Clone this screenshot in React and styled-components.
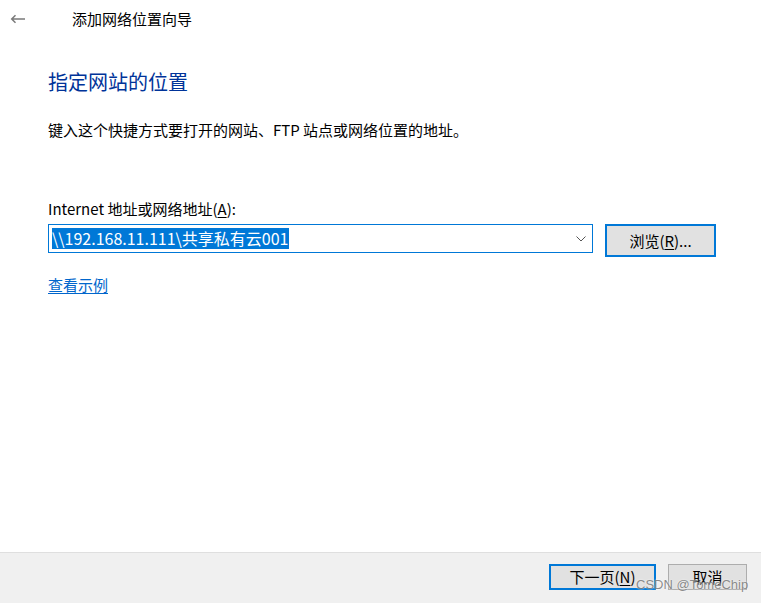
import styled, { createGlobalStyle } from 'styled-components';

const GlobalStyle = createGlobalStyle`
  html, body {
    margin: 0;
    padding: 0;
    background: #ffffff;
  }
  body {
    font-family: "Noto Sans CJK SC", "Noto Sans", sans-serif;
    color: #000000;
  }
`;

const Window = styled.div`
  position: relative;
  display: flex;
  flex-direction: column;
  width: 761px;
  height: 603px;
  overflow: hidden;
  background: #ffffff;
`;

const TopBar = styled.div`
  display: flex;
  align-items: center;
  height: 38px;
  padding-left: 10px;
`;

const BackButton = styled.div`
  display: flex;
  align-items: center;
  width: 62px;
`;

const WindowTitle = styled.span`
  font-size: 15px;
  line-height: 20px;
  color: #000000;
`;

const Content = styled.div`
  display: flex;
  flex-direction: column;
  align-items: flex-start;
  padding: 0 45px 0 48px;
`;

const Heading = styled.h1`
  margin: 30px 0 0;
  font-size: 20px;
  font-weight: 400;
  line-height: 28px;
  color: #003399;
`;

const Text = styled.p`
  margin: ${(p) => p.$top}px 0 0;
  font-size: 15px;
  line-height: 20px;
`;

const Key = styled.span`
  text-decoration: underline;
  text-underline-offset: 2px;
`;

const FieldRow = styled.div`
  display: flex;
  align-items: flex-start;
  gap: 12px;
  margin-top: 5px;
`;

const Combo = styled.div`
  display: flex;
  align-items: center;
  box-sizing: border-box;
  width: 545px;
  height: 29px;
  padding: 0 6px 0 3px;
  border: 1px solid #0078d7;
  background: #ffffff;
`;

const Selected = styled.span`
  font-size: 16px;
  line-height: 21px;
  background: #0078d7;
  color: #ffffff;
  padding-right: 1px;
`;

const Chevron = styled.svg`
  margin-left: auto;
`;

const Button = styled.div`
  display: flex;
  align-items: center;
  justify-content: center;
  box-sizing: border-box;
  width: ${(p) => p.$w}px;
  height: ${(p) => p.$h}px;
  background: #e1e1e1;
  border: ${(p) => (p.$focus ? '2px solid #0078d7' : '1px solid #adadad')};
  font-size: 15px;
  line-height: 20px;
  color: #000000;
`;

const Link = styled.a`
  margin-top: 18px;
  font-size: 15px;
  line-height: 20px;
  color: #0066cc;
  text-decoration: underline;
  text-underline-offset: 2px;
`;

const Footer = styled.div`
  display: flex;
  justify-content: flex-end;
  align-items: flex-start;
  gap: 12px;
  margin-top: auto;
  box-sizing: border-box;
  height: 51px;
  padding: 11px 14px 0 0;
  background: #f0f0f0;
  border-top: 1px solid #dfdfdf;
`;

const Watermark = styled.span`
  position: absolute;
  left: 636px;
  top: 577px;
  font-family: "Liberation Sans", Arial, sans-serif;
  font-size: 13px;
  line-height: 16px;
  color: rgba(110, 110, 110, 0.8);
  text-shadow: 0 0 2px rgba(255, 255, 255, 0.95);
  white-space: nowrap;
  pointer-events: none;
`;

function App() {
  return (
    <>
      <GlobalStyle />
      <Window>
        <TopBar>
          <BackButton>
            <svg width="16" height="10" viewBox="0 0 16 10">
              <path d="M15 5H2M5.5 1.2L1.7 5l3.8 3.8" fill="none" stroke="#7a7a7a" strokeWidth="1.5" />
            </svg>
          </BackButton>
          <WindowTitle>添加网络位置向导</WindowTitle>
        </TopBar>
        <Content>
          <Heading>指定网站的位置</Heading>
          <Text $top={24}>键入这个快捷方式要打开的网站、FTP 站点或网络位置的地址。</Text>
          <Text $top={59}>
            Internet 地址或网络地址(<Key>A</Key>):
          </Text>
          <FieldRow>
            <Combo>
              <Selected>\\192.168.11.111\共享私有云001</Selected>
              <Chevron width="10" height="6" viewBox="0 0 10 6">
                <path d="M0.5 0.5L5 5l4.5-4.5" fill="none" stroke="#555555" strokeWidth="1" />
              </Chevron>
            </Combo>
            <Button $w={111} $h={33} $focus>
              浏览(<Key>R</Key>)...
            </Button>
          </FieldRow>
          <Link>查看示例</Link>
        </Content>
        <Footer>
          <Button $w={107} $h={26} $focus>
            下一页(<Key>N</Key>)
          </Button>
          <Button $w={79} $h={26}>
            取消
          </Button>
        </Footer>
        <Watermark>CSDN @TomeChip</Watermark>
      </Window>
    </>
  );
}

export default App;
